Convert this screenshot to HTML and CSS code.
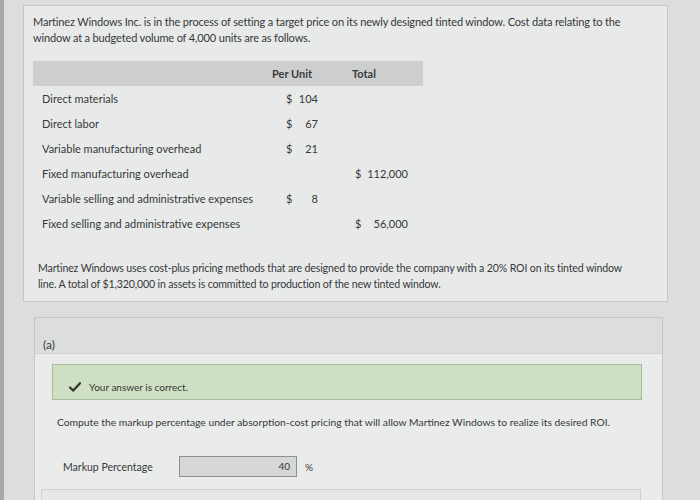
FILE: index.html
```html
<!DOCTYPE html>
<html>
<head>
<meta charset="utf-8">
<link rel="stylesheet" href="styles.css">
</head>
<body>
<div class="page">
  <section class="panel question">
    <p class="intro">Martinez Windows Inc. is in the process of setting a target price on its newly designed tinted window. Cost data relating to the window at a budgeted volume of 4,000 units are as follows.</p>
    <div class="table">
      <div class="hcell"></div>
      <div class="hcell per">Per Unit</div>
      <div class="hcell tot">Total</div>

      <div class="label">Direct materials</div>
      <div class="unit"><span>$</span><span>104</span></div>
      <div class="total"></div>

      <div class="label">Direct labor</div>
      <div class="unit"><span>$</span><span>67</span></div>
      <div class="total"></div>

      <div class="label">Variable manufacturing overhead</div>
      <div class="unit"><span>$</span><span>21</span></div>
      <div class="total"></div>

      <div class="label">Fixed manufacturing overhead</div>
      <div class="unit"></div>
      <div class="total"><span>$</span><span>112,000</span></div>

      <div class="label">Variable selling and administrative expenses</div>
      <div class="unit"><span>$</span><span>8</span></div>
      <div class="total"></div>

      <div class="label">Fixed selling and administrative expenses</div>
      <div class="unit"></div>
      <div class="total"><span>$</span><span>56,000</span></div>
    </div>
    <p class="para">Martinez Windows uses cost-plus pricing methods that are designed to provide the company with a 20% ROI on its tinted window line. A total of $1,320,000 in assets is committed to production of the new tinted window.</p>
  </section>

  <section class="panel part">
    <div class="part-head">(a)</div>
    <div class="part-body">
      <div class="correct">
        <svg class="check" width="12" height="10" viewBox="0 0 12 10"><path d="M1 5.5 L4.3 8.6 L11 1.2" fill="none" stroke="#2f3a2c" stroke-width="2.2" stroke-linecap="round" stroke-linejoin="round"/></svg>
        <span>Your answer is correct.</span>
      </div>
      <p class="compute">Compute the markup percentage under absorption-cost pricing that will allow Martinez Windows to realize its desired ROI.</p>
      <div class="answer">
        <span class="answer-label">Markup Percentage</span>
        <span class="input">40</span>
        <span class="pct">%</span>
      </div>
      <div class="next"></div>
    </div>
  </section>
</div>
</body>
</html>
```

FILE: styles.css
```css
html, body {
  margin: 0;
  padding: 0;
}
body {
  width: 700px;
  height: 500px;
  overflow: hidden;
  background: #dcdede;
  font-family: Lato, "Open Sans", sans-serif;
  color: #363838;
}
.page {
  border-left: 4px solid #a7a9a9;
  height: 500px;
  box-sizing: border-box;
  padding-top: 5px;
}
.panel {
  background: #e8eaea;
  border: 1px solid #c6c8c8;
  box-sizing: border-box;
}
.question {
  margin-left: 19px;
  width: 645px;
  padding: 8px 10px 9px 9px;
}
.intro {
  margin: 0;
  font-size: 11px;
  line-height: 16px;
  letter-spacing: -0.15px;
}
.table {
  margin-top: 15px;
  width: 390px;
  display: grid;
  grid-template-columns: 229px 60px 101px;
  grid-auto-rows: 25px;
  font-size: 11px;
}
.hcell {
  background: #cdcfcf;
  display: flex;
  align-items: center;
  font-weight: bold;
  color: #3a3c3c;
}
.hcell.per {
  justify-content: center;
}
.hcell.tot {
  padding-left: 30px;
}
.label {
  display: flex;
  align-items: center;
  padding-left: 9px;
}
.unit, .total {
  display: flex;
  align-items: center;
  justify-content: space-between;
}
.unit {
  padding: 0 4px 0 24px;
}
.total {
  padding: 0 15px 0 33px;
}
.para {
  margin: 24px 0 0 5px;
  width: 600px;
  font-size: 10.6px;
  line-height: 16px;
  letter-spacing: -0.15px;
}
.part {
  margin: 15px 0 0 30px;
  width: 629px;
  height: 190px;
  background: #eaecec;
  border-bottom: none;
}
.part-head {
  background: #dcdede;
  height: 36px;
  box-sizing: border-box;
  padding: 19px 0 0 8px;
  font-size: 12px;
  line-height: 16px;
  border-bottom: 1px solid #d2d4d4;
}
.part-body {
  padding: 10px 20px 0 17px;
}
.correct {
  height: 36px;
  box-sizing: border-box;
  background: #cfdfc3;
  border: 1px solid #a5bd97;
  display: flex;
  align-items: center;
  padding: 10px 0 0 16px;
  gap: 8px;
  font-size: 10px;
}
.check {
  display: block;
}
.compute {
  margin: 14px 0 0 5px;
  font-size: 10.3px;
  line-height: 16px;
}
.answer {
  margin-top: 26px;
  display: flex;
  align-items: center;
  font-size: 10.5px;
}
.answer-label {
  margin-left: 11px;
  width: 116px;
}
.input {
  width: 118px;
  height: 21px;
  box-sizing: border-box;
  background: #d6d8d8;
  border: 1px solid #8e9090;
  text-align: right;
  padding-right: 6px;
  line-height: 19px;
  font-size: 10px;
}
.pct {
  margin-left: 8px;
  font-size: 10px;
}
.next {
  margin: 12px 0 0 -11px;
  width: 598px;
  height: 20px;
  border: 1px solid #cfd1d1;
  background: #e6e8e8;
}
```
